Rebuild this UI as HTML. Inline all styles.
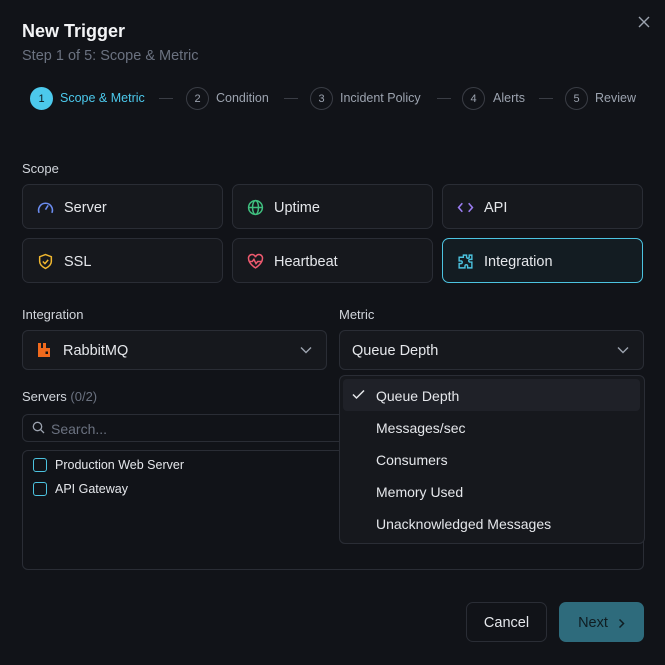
<html><head><style>
*{box-sizing:border-box;margin:0;padding:0}
body{width:665px;height:665px;background:#111318;font-family:"Liberation Sans",sans-serif;color:#e5e7eb;position:relative;overflow:hidden}
.a{position:absolute}
.t{font-size:13px}
.card{position:absolute;width:201px;height:45px;border:1px solid #2a2d35;border-radius:7px;background:#16181d;display:flex;align-items:center;padding-left:14px;padding-top:2px;font-size:14.5px;color:#e5e7eb}
.card svg{margin-right:10px}
.circ{position:absolute;width:23px;height:23px;border-radius:50%;border:1.5px solid #3a3d45;color:#9ca3af;font-size:11px;display:flex;align-items:center;justify-content:center;top:87px}
.sl{position:absolute;top:91px;font-size:12.5px;color:#9ca3af}
.dash{position:absolute;top:98px;width:14px;height:1px;background:#3a3d45}
.box{position:absolute;border:1px solid #2a2d35;border-radius:6px;background:#16181d}
.it{position:absolute;left:376px;font-size:14px;color:#e5e7eb}
.cb{position:absolute;left:33px;width:14px;height:14px;border:1.5px solid #4cc3e0;border-radius:3px}
</style></head><body>
<div class="a" style="left:22px;top:21px;font-size:18px;font-weight:bold;color:#f3f4f6">New Trigger</div>
<div class="a" style="left:22px;top:48px;font-size:14.5px;color:#6b7280">Step 1 of 5: Scope &amp; Metric</div>
<svg class="a" style="left:638px;top:16px" width="12" height="12" viewBox="0 0 12 12"><path d="M1 1L11 11M11 1L1 11" stroke="#9ca3af" stroke-width="1.4"/></svg>
<div class="circ" style="left:30px;background:#4cc9ec;border-color:#4cc9ec;color:#0b1a20">1</div>
<div class="sl" style="left:60px;color:#4cc9ec">Scope &amp; Metric</div>
<div class="dash" style="left:159px"></div>
<div class="circ" style="left:186px">2</div><div class="sl" style="left:216px">Condition</div>
<div class="dash" style="left:284px"></div>
<div class="circ" style="left:310px">3</div><div class="sl" style="left:340px">Incident Policy</div>
<div class="dash" style="left:437px"></div>
<div class="circ" style="left:462px">4</div><div class="sl" style="left:493px">Alerts</div>
<div class="dash" style="left:539px"></div>
<div class="circ" style="left:565px">5</div><div class="sl" style="left:595px">Review</div>

<div class="a t" style="left:22px;top:161px;color:#d1d5db">Scope</div>
<div class="card" style="left:22px;top:184px"><svg width="17" height="17" viewBox="0 0 16 16" fill="none" stroke="#6b8cf0" stroke-width="1.5"><path d="M2 13A6.5 6.5 0 1 1 14 13"/><path d="M8 10L10.5 6"/></svg>Server</div>
<div class="card" style="left:232px;top:184px"><svg width="17" height="17" viewBox="0 0 16 16" fill="none" stroke="#3fbf7f" stroke-width="1.4"><circle cx="8" cy="8" r="6.5"/><ellipse cx="8" cy="8" rx="2.8" ry="6.5"/><path d="M1.5 8h13"/></svg>Uptime</div>
<div class="card" style="left:442px;top:184px"><svg width="17" height="17" viewBox="0 0 16 16" fill="none" stroke="#9a7cf0" stroke-width="1.5"><path d="M5 4L1.5 8L5 12M11 4L14.5 8L11 12"/></svg>API</div>
<div class="card" style="left:22px;top:238px"><svg width="17" height="17" viewBox="0 0 16 16" fill="none" stroke="#f0b72f" stroke-width="1.4"><path d="M8 1.5L13.5 3.5V8c0 3-2.5 5-5.5 6.5C5 13 2.5 11 2.5 8V3.5Z"/><path d="M5.5 8l2 2 3-3.5"/></svg>SSL</div>
<div class="card" style="left:232px;top:238px"><svg width="17" height="17" viewBox="0 0 16 16" fill="none" stroke="#ef5a6f" stroke-width="1.4"><path d="M8 14S1.5 10 1.5 5.5A3.2 3.2 0 0 1 8 4a3.2 3.2 0 0 1 6.5 1.5C14.5 10 8 14 8 14Z"/><path d="M2 8h3l1.5-2 2 4 1.5-2h4"/></svg>Heartbeat</div>
<div class="card" style="left:442px;top:238px;border-color:#4cc3e0;background:#131c22"><svg width="17" height="17" viewBox="0 0 16 16" fill="none" stroke="#4cc3e0" stroke-width="1.3"><path d="M6 2h3v2a1.3 1.3 0 0 0 2.5 0V2H14v4h-2a1.3 1.3 0 0 0 0 2.5h2V14h-4v-2a1.3 1.3 0 0 0-2.5 0v2H2v-4h2a1.3 1.3 0 0 0 0-2.5H2V4h4Z"/></svg>Integration</div>

<div class="a t" style="left:22px;top:307px;color:#d1d5db">Integration</div>
<div class="a t" style="left:339px;top:307px;color:#d1d5db">Metric</div>
<div class="box" style="left:22px;top:330px;width:305px;height:40px"></div>
<svg class="a" style="left:36px;top:342px" width="16" height="16" viewBox="0 0 16 16"><path d="M2 1h3v5h2V1h3v5h4v9H2Z" fill="#f06a1d"/><rect x="9.5" y="9.5" width="2.5" height="2.5" fill="#111"/></svg>
<div class="a" style="left:63px;top:343px;font-size:14.5px">RabbitMQ</div>
<svg class="a" style="left:300px;top:346px" width="12" height="8" viewBox="0 0 12 8"><path d="M1 1.5L6 6.5L11 1.5" stroke="#9ca3af" stroke-width="1.4" fill="none"/></svg>
<div class="box" style="left:339px;top:330px;width:305px;height:40px"></div>
<div class="a" style="left:352px;top:343px;font-size:14.5px">Queue Depth</div>
<svg class="a" style="left:617px;top:346px" width="12" height="8" viewBox="0 0 12 8"><path d="M1 1.5L6 6.5L11 1.5" stroke="#9ca3af" stroke-width="1.4" fill="none"/></svg>

<div class="a t" style="left:22px;top:389px;color:#d1d5db">Servers <span style="color:#6b7280">(0/2)</span></div>
<div class="box" style="left:22px;top:414px;width:340px;height:28px;background:#111318"></div>
<svg class="a" style="left:32px;top:421px" width="13" height="13" viewBox="0 0 13 13" fill="none" stroke="#9ca3af" stroke-width="1.3"><circle cx="5.5" cy="5.5" r="4.2"/><path d="M8.7 8.7L12 12"/></svg>
<div class="a" style="left:51px;top:421px;font-size:14px;color:#6b7280">Search...</div>
<div class="box" style="left:22px;top:450px;width:622px;height:120px;background:#111318"></div>
<div class="cb" style="top:458px"></div><div class="a" style="left:55px;top:458px;font-size:12.5px">Production Web Server</div>
<div class="cb" style="top:482px"></div><div class="a" style="left:55px;top:482px;font-size:12.5px">API Gateway</div>

<div class="box" style="left:339px;top:375px;width:306px;height:169px;background:#16181d;border-color:#2a2d35"></div>
<div class="a" style="left:343px;top:379px;width:297px;height:32px;background:#1f2128;border-radius:4px"></div>
<svg class="a" style="left:352px;top:389px" width="13" height="11" viewBox="0 0 13 11"><path d="M1 5.5L4.5 9L12 1.5" stroke="#e5e7eb" stroke-width="1.5" fill="none"/></svg>
<div class="it" style="top:388px">Queue Depth</div>
<div class="it" style="top:420px">Messages/sec</div>
<div class="it" style="top:452px">Consumers</div>
<div class="it" style="top:484px">Memory Used</div>
<div class="it" style="top:516px">Unacknowledged Messages</div>

<div class="a" style="left:466px;top:602px;width:81px;height:40px;border:1px solid #2a2d35;border-radius:7px;display:flex;align-items:center;justify-content:center;padding-top:2px;font-size:14.5px;color:#e5e7eb">Cancel</div>
<div class="a" style="left:559px;top:602px;width:85px;height:40px;background:#2e6b7c;border-radius:7px;display:flex;align-items:center;justify-content:center;padding-top:2px;font-size:14.5px;color:#0f1d22">Next<svg style="margin-left:10px" width="7" height="11" viewBox="0 0 7 11"><path d="M1.5 1.5L5.5 5.5L1.5 9.5" stroke="#0f1d22" stroke-width="1.5" fill="none"/></svg></div>
</body></html>
